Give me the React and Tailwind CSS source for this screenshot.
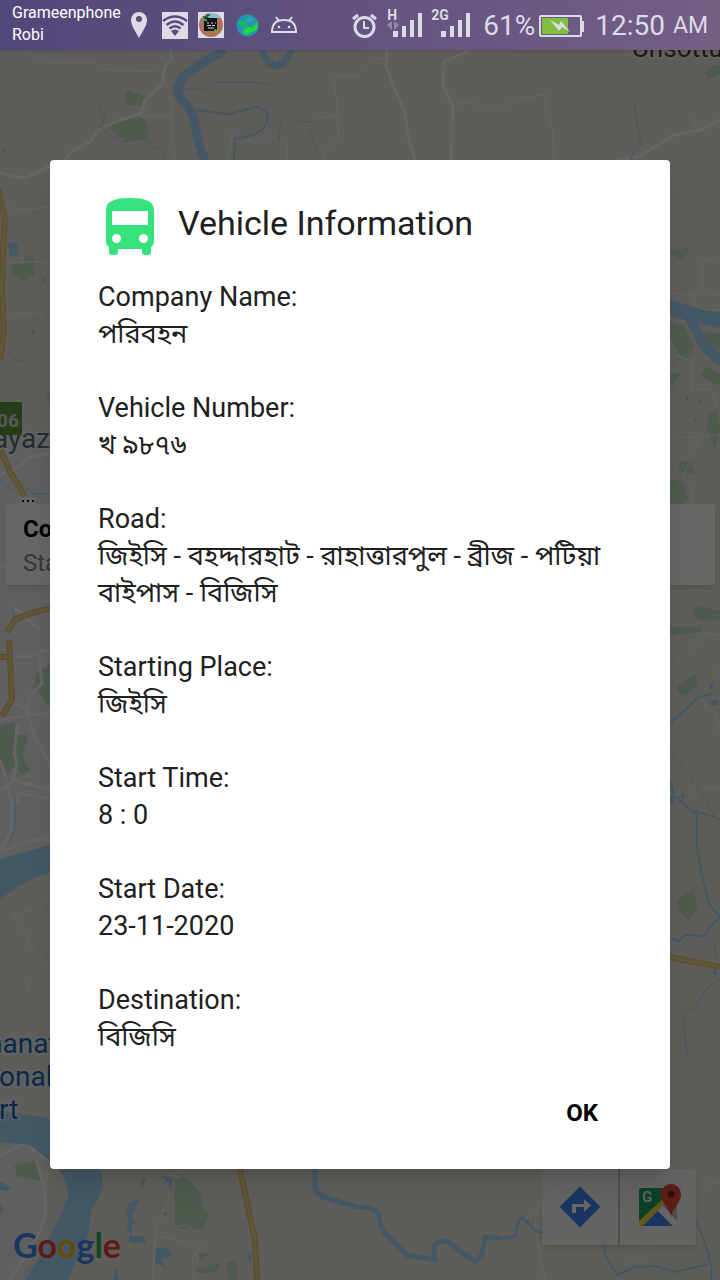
import React from "react";

const fields = [
  { label: "Company Name:", value: "পরিবহন" },
  { label: "Vehicle Number:", value: "খ ৯৮৭৬" },
  { label: "Road:", value: "জিইসি - বহদ্দারহাট - রাহাত্তারপুল - ব্রীজ - পটিয়া বাইপাস - বিজিসি" },
  { label: "Starting Place:", value: "জিইসি" },
  { label: "Start Time:", value: "8 : 0" },
  { label: "Start Date:", value: "23-11-2020" },
  { label: "Destination:", value: "বিজিসি" },
];

function CityMap() {
  return (
    <svg
      className="absolute inset-0 h-full w-full"
      viewBox="0 0 720 1280"
      preserveAspectRatio="xMidYMin slice"
      fontFamily="Roboto, sans-serif"
      aria-label="Map"
    >
      <rect width="720" height="1280" fill="#ebe8df" />
      {/* built-up area */}
      <path d="M0 440 L50 455 V845 L0 860 Z M0 1150 L34 1140 L48 1175 L46 1220 L20 1280 H0 Z" fill="#eeeeee" />
      {/* parks */}
      <g fill="#c3e0c0">
        <path d="M126 90 L144 96 L141 106 L124 105 Z M108 124 L125 117 L142 117 L148 125 L147 139 L131 142 L118 137 Z" />
        <path d="M24 254 L36 260 L34 266 L22 263 Z M12 264 L30 263 L35 274 L24 281 L11 275 Z" />
        <path d="M705 72 L712 66 L720 65 V74 L708 79 Z" />
        <path d="M670 251 L690 247 L684 260 L670 254 Z M670 322 L684 325 L693 345 L687 358 L676 353 L670 336 Z M701 332 L720 334 V351 L708 348 Z" />
        <path d="M700 374 L706 367 L720 373 V385 L708 381 Z M670 373 L681 373 L671 388 Z M708 413 L717 412 L720 431 L715 450 L707 428 Z M679 462 L690 460 L695 475 L680 471 Z M670 480 L683 481 L688 499 L681 506 L670 506 Z" />
        <path d="M695 605 L720 611 V619 L703 621 L693 614 Z M670 627 L701 627 V632 L670 635 Z M677 687 L686 681 L696 674 L697 685 L687 696 L678 693 Z M677 899 L694 888 L697 910 L689 921 L677 909 Z" />
        <path d="M0 727 L15 722 L15 765 L5 777 L0 769 Z M17 735 H28 L23 757 L30 770 L23 775 L16 768 Z M36 672 L50 665 V707 L34 687 Z" />
        <path d="M175 1180 L184 1176 L200 1192 L204 1208 L209 1214 L203 1230 L175 1228 Z M199 1252 L210 1255 L199 1261 Z M196 1270 L221 1262 L216 1272 L199 1274 Z M226 1263 L236 1261 L238 1280 H229 Z M14 1166 L38 1160 L40 1181 L17 1176 Z" />
      </g>
      {/* white streets */}
      <g fill="none" stroke="#fcfcfc" strokeLinejoin="round">
        <path strokeWidth="3" d="M171 50 V60 L165 66 L162 84 L145 101 L141 114 L120 120 L98 130 L90 142 L73 150 L65 160" />
        <path strokeWidth="1" d="M20 50 L50 62 L96 63 L97 69 L155 72 M165 84 L171 94 V115 L174 160 M141 117 L171 116" />
        <path strokeWidth="3" d="M387 50 L386 66 L395 90 L405 112 L408 136 L415 160 M470 50 L444 62 L443 86 L453 106 L451 160" />
        <path strokeWidth="1" d="M386 58 L373 59 L360 73 M453 105 L467 102 L497 110 L525 97 L545 95 L546 116 L552 128 L554 160 M334 77 L360 75 M334 77 L338 116 L316 118 M338 116 L339 140 L325 150 L323 160 M228 160 L232 132 L253 143 L263 135 L287 140 V160 M694 128 L695 118 L689 116" />
        <path strokeWidth="3" d="M720 120 L700 130 L674 135 L640 156 L615 161 M0 173 L25 178 L50 166" />
        <path strokeWidth="1" d="M0 205 L20 210 L50 207 M10 262 H50 M5 320 L18 313 L35 314 L50 311 M22 248 L24 266" />
        <path strokeWidth="3" d="M0 475 L20 467 L27 458 L50 453 M0 566 H14 M0 600 L20 612 L40 630 M10 656 L29 657 L39 651 L50 651 M39 650 L40 668 L42 683 L29 698 L27 712 L35 737 L50 764 M0 720 L30 715 L50 713 M18 723 L14 752 L17 765 L12 782 L0 790 M12 780 L50 790 M0 760 L5 775 L10 800 L18 802 V793 L50 799 M12 802 L11 831 L0 852 M0 852 L20 843 L50 837 M12 700 L32 714 M0 1156 L25 1143 L50 1162 M36 1160 L44 1185 L46 1212 L40 1232 L10 1280" />
        <path strokeWidth="1" d="M50 901 L14 916 L34 951 L50 966 M23 981 H29 V992 M720 258 L702 262 V288 L694 291 V304 L704 310 H720 M670 293 L694 295 M704 288 L714 294 L720 295 M670 342 L682 360 H691 V389 L713 390 L716 405 M670 438 L700 437 L720 434 M700 437 L684 474 L693 494 L691 502" />
        <path strokeWidth="1" d="M670 668 L686 652 L698 640 M720 668 L702 695 L706 709 L715 712 L720 732 M670 795 L690 793 L695 788 L720 787 M700 1185 L720 1182 M720 635 L699 633 L694 640" />
        <path strokeWidth="1" d="M185 1169 L177 1172 L168 1200 L156 1230 L152 1280 M156 1237 L172 1238 L179 1242 L201 1245 L192 1260 L194 1280 M171 1228 L185 1225 L199 1232 M540 1169 L541 1199 L535 1215 L538 1245 L545 1280 M548 1192 L575 1185 L590 1172 M622 1266 L640 1258 L648 1247 L655 1210" />
      </g>
      <path d="M670 750 L690 775 L720 826" fill="none" stroke="#cfcfcb" />
      {/* rivers */}
      <g fill="none" stroke="#a8dafc" strokeLinejoin="round">
        <path strokeWidth="9" d="M225 50 Q195 66 184 76 Q172 92 184 102 Q192 108 195 125 Q198 145 206 163" />
        <path strokeWidth="7" d="M262 50 Q275 82 292 50" />
        <path strokeWidth="2" d="M195 110 L230 114 L256 107 Q274 112 265 126 Q258 137 235 138 L234 160" />
        <path strokeWidth="1" d="M182 89 L203 89 L213 82 L255 82 L276 86 M99 105 L105 116 L101 128 L120 142 L143 139 L152 147 L163 150 L164 160 M279 140 Q278 115 292 115 M297 121 L313 122 M310 132 L316 151 M625 93 L634 104 L641 145 L633 152 L631 160" />
        <path strokeWidth="15" d="M666 305 Q690 316 724 321" />
        <path strokeWidth="10" d="M690 317 Q705 355 724 362" />
        <path strokeWidth="1" d="M0 351 L10 352 L16 361 L26 359 M0 599 L12 608 L16 619 M0 480 L12 490 L20 482 L33 494 H50 M15 795 V828 L9 843 M670 361 L691 357 L694 342" />
        <path strokeWidth="2" d="M670 723 L681 713 L691 705 L698 697 L712 694 M670 780 L674 796 L697 815 V848 L702 875 L709 904 L720 917 L710 927 L705 936 L685 935 L679 941 L670 938 M695 811 L720 819" />
        <path strokeWidth="1" d="M720 979 L705 990 L697 1006 L683 1013 L687 1055 M720 941 Q708 946 720 962" />
        <path strokeWidth="5" d="M315 1165 V1190 L323 1197 L358 1207 Q378 1207 379 1216 Q380 1228 386 1234 L408 1256 L435 1260 L434 1246 Q436 1240 448 1242 L475 1262 L482 1255 L485 1237 L500 1238" />
        <path strokeWidth="3" d="M500 1238 L515 1237 L518 1222 Q521 1214 527 1222 L536 1231 L548 1234 L585 1225" />
        <path strokeWidth="2" d="M585 1225 H603 L605 1255 L617 1275 L635 1267 L655 1266 L675 1272 L709 1264 M680 1208 L693 1215 L704 1240 L711 1264 V1280" />
      </g>
      <g fill="#a8dafc">
        <path d="M0 859 L50 845 V873 Q25 880 0 899 Z" />
        <path d="M0 1111 L45 1117 L90 1150 L102 1175 Q104 1195 92 1208 L88 1235 L68 1280 H25 L35 1264 Q60 1220 68 1196 Q69 1178 53 1164 L30 1145 L0 1142 Z" />
        <path d="M7 242 L17 243 L18 257 L10 256 Z M46 394 L50 393 V407 Z M32 330 H35 V335 H32 Z M42 278 H45 V282 H42 Z M15 86 L18 87 L17 90 L15 89 Z M3 150 H6 V153 H3 Z M0 1181 L10 1187 L10 1191 L0 1190 Z M0 1205 L4 1209 L0 1213 Z" />
        <path d="M141 1180 L147 1177 L144 1187 L140 1184 Z M162 1176 L173 1178 L172 1193 L168 1183 Z M130 1202 L139 1200 L134 1212 L132 1220 L139 1221 L132 1225 V1235 L127 1230 L128 1218 L125 1210 Z M129 1235 L144 1237 L146 1244 L129 1242 Z M156 1247 L168 1248 L172 1256 L161 1260 L167 1268 L155 1263 Z M115 1265 L120 1280 H113 Z M249 1253 L252 1254 L251 1264 L247 1260 Z" />
        <path d="M186 1187 L192 1190 L190 1192 L187 1190 Z M192 1214 L194 1218 L190 1219 Z M199 1199 L202 1202 L199 1203 Z M163 1212 H167 V1215 H163 Z" />
        <path d="M686 396 H688 V400 H686 Z M699 400 H701 V404 H699 Z M694 419 H696 V423 H694 Z M709 683 H713 V689 H709 Z M711 700 H717 V706 H711 Z M681 793 H684 V798 H681 Z M670 796 H674 V804 H670 Z M713 970 H717 V975 H713 Z" />
      </g>
      {/* highways */}
      <g fill="none" strokeLinejoin="round">
        <path stroke="#dcc06a" strokeWidth="6" d="M-2 190 L5 220 L3 250 L2 290 L4 330 L0 360 M0 449 L10 472 L20 487 L27 505 M50 609 Q30 612 15 620 L7 632 M9 640 L12 700 L2 716 M0 657 H9 M239 1165 L255 1240 L257 1280 M670 957 L720 967" />
        <path stroke="#f0d588" strokeWidth="4" d="M-2 190 L5 220 L3 250 L2 290 L4 330 L0 360 M0 449 L10 472 L20 487 L27 505 M50 609 Q30 612 15 620 L7 632 M9 640 L12 700 L2 716 M0 657 H9 M239 1165 L255 1240 L257 1280 M670 957 L720 967" />
      </g>
      {/* labels */}
      <g stroke="#ffffff" strokeOpacity="0.500" strokeWidth="4" paintOrder="stroke" strokeLinejoin="round">
        <text x="632" y="57" fontSize="26" fill="#444444">Unsottu</text>
        <text x="-7" y="448" fontSize="28" fill="#56717e">ayaz</text>
        <g fontSize="28" fill="#1a66c2">
          <text x="-13" y="1053">nanat</text>
          <text x="-1" y="1086">onal</text>
          <text x="-1" y="1119">rt</text>
        </g>
      </g>
      <rect x="-5" y="402" width="27" height="33" fill="#5c9c3a" />
      <text x="-3" y="427" fontSize="19" fontWeight="700" fill="#dddddd">06</text>
      <rect x="20" y="497" width="16" height="7" fill="#ffffff" />
      <path d="M22 501 h2 m3 0 h2 m3 0 h2" stroke="#111111" strokeWidth="2" />
    </svg>
  );
}

function SignalBars() {
  return (
    <svg width="30" height="27" viewBox="0 0 30 27" fill="currentColor" aria-hidden="true">
      <rect x="0" y="18" width="5" height="6" />
      <rect x="9" y="13" width="4" height="11" />
      <rect x="17" y="7" width="4" height="17" />
      <rect x="25" y="0" width="4" height="24" />
    </svg>
  );
}

function StatusBar() {
  return (
    <header className="relative z-20 flex h-[50px] items-center bg-linear-to-r from-[#52477a] to-[#745f85] pr-3 pl-3 text-[#dedae6] shadow-sm">
      <div className="mb-0.5 w-[110px] text-base leading-[22px] text-white">
        <p>Grameenphone</p>
        <p>Robi</p>
      </div>
      <div className="ml-2 flex items-center">
        <svg width="18" height="26" viewBox="0 0 18 26" aria-hidden="true">
          <path fillRule="evenodd" fill="currentColor" d="M9 0 A8 8 0 0 1 17 8 C17 14 12 20 9 26 C6 20 1 14 1 8 A8 8 0 0 1 9 0 Z M9 4 a3 3 0 1 0 0 6 a3 3 0 1 0 0 -6 Z" />
        </svg>
        <svg className="ml-3.5" width="26" height="27" viewBox="0 0 26 27" aria-hidden="true">
          <rect width="26" height="27" fill="currentColor" />
          <g fill="none" stroke="#574c7b" strokeWidth="2.6">
            <path d="M1 9 Q13 0 25 9" />
            <path d="M4.500 13 Q13 6 21.500 13" />
            <path d="M7.500 16.500 Q13 12 18.500 16.500" />
          </g>
          <path d="M9 19 Q13 16 17 19 L13 24 Z" fill="#574c7b" />
        </svg>
        <svg className="ml-2.5" width="26" height="26" viewBox="0 0 26 26" aria-hidden="true">
          <rect width="26" height="26" fill="currentColor" />
          <circle cx="13" cy="13" r="12" fill="#ad715c" />
          <path d="M3 6 Q13 -4 23 6 Z" fill="#82bfd1" />
          <path d="M5 5 h4 v-2 h3 M6 6 h5" stroke="#244b35" strokeWidth="1.500" fill="none" />
          <rect x="6" y="6" width="13" height="13" fill="#101416" />
          <path d="M9 11 h2 m2 0 h2 m2 0 h1 M9 13.500 h4 m1 0 h3 M10 16 h6" stroke="#d4dadb" strokeWidth="1" />
          <path d="M6 7 l3 2 M16 18.500 h3" stroke="#29c746" strokeWidth="2" />
        </svg>
        <svg className="ml-3" width="23" height="23" viewBox="0 0 23 23" aria-hidden="true">
          <circle cx="11.500" cy="11.500" r="11" fill="#2894b0" />
          <path d="M1 7 L9 10 L13 14 L22 8 L21 16 L13 19 L11 21 L7 19 L9 15 Z" fill="#1cdc40" />
          <path d="M2 7 L10 8 L12 14 L9 15 Z M13 14 L22 8 L17 14 Z" fill="#16b95b" />
          <path d="M13 2 L18 6 L13 9 L9 7 Z" fill="#24aaae" />
        </svg>
        <svg className="ml-3" width="26" height="18" viewBox="0 0 26 18" fill="none" stroke="currentColor" strokeWidth="2" aria-hidden="true">
          <path d="M1 16 Q1 4 13 4 Q25 4 25 16 Z M8 5 L5 1 M18 5 L21 1" />
          <circle cx="8" cy="11" r="1.300" fill="currentColor" stroke="none" />
          <circle cx="18" cy="11" r="1.300" fill="currentColor" stroke="none" />
        </svg>
      </div>
      <div className="mt-0.5 ml-auto flex items-center">
        <svg width="25" height="26" viewBox="0 0 25 26" fill="none" stroke="currentColor" aria-hidden="true">
          <circle cx="12.500" cy="14" r="9.500" strokeWidth="3" />
          <path d="M12 8 V15 H17" strokeWidth="2" />
          <path d="M1 6 L6 2 M19 2 L24 6" strokeWidth="3" />
        </svg>
        <div className="relative ml-4">
          <SignalBars />
          <span className="absolute -top-1.5 -left-1.5 text-sm leading-4 font-bold">H</span>
          <svg className="absolute top-2 -left-1.5" width="12" height="9" viewBox="0 0 12 9" fill="#9288ac" aria-hidden="true">
            <path d="M0 4 L5 0 V9 Z M12 4 L7 0 V9 Z" />
          </svg>
        </div>
        <div className="relative ml-[18px]">
          <SignalBars />
          <span className="absolute -top-1.5 -left-2.5 text-sm leading-4 font-bold">2G</span>
        </div>
        <span className="ml-3 text-[28px] leading-8">61%</span>
        <svg className="ml-1" width="46" height="23" viewBox="0 0 46 23" aria-hidden="true">
          <rect x="1" y="1" width="41" height="20" rx="1" fill="none" stroke="currentColor" strokeWidth="2" />
          <path d="M43 6 h2 v11 h-2 Z" fill="currentColor" />
          <rect x="3" y="3" width="26" height="16" fill="#82be3d" />
          <path d="M11 5 L20 10 L22 6 L31 17 L23 12 L20 16 Z" fill="currentColor" />
        </svg>
        <span className="ml-2.5 text-[28px] leading-8">12:50</span>
        <span className="ml-2 text-[23px] leading-8">AM</span>
      </div>
    </header>
  );
}

function GoogleMark() {
  return (
    <p className="font-[Lato,sans-serif] text-[34px] leading-10 font-bold" aria-label="Google">
      <span className="text-[#4285f4]">G</span>
      <span className="text-[#ea4335]">o</span>
      <span className="text-[#fbbc05]">o</span>
      <span className="text-[#4285f4]">g</span>
      <span className="text-[#34a853]">l</span>
      <span className="text-[#ea4335]">e</span>
    </p>
  );
}

function MapToolbar() {
  return (
    <div className="flex h-[76px] divide-x-2 divide-[#c4c4c4] rounded-xs bg-white/70 shadow-md">
      <button type="button" aria-label="Directions" className="flex w-[78px] items-center justify-center">
        <svg width="40" height="40" viewBox="0 0 40 40" aria-hidden="true">
          <path d="M20 1 L39 20 L20 39 L1 20 Z" fill="#4285f4" stroke="#4285f4" strokeWidth="2" strokeLinejoin="round" />
          <path d="M12 26 V17 H24 V12 L31 18.500 L24 25 V20 H16 V26 Z" fill="#ffffff" />
        </svg>
      </button>
      <button type="button" aria-label="Open in Google Maps" className="flex w-[76px] items-center justify-center">
        <svg className="mb-1 ml-1" width="42" height="42" viewBox="0 0 42 42" aria-hidden="true">
          <path d="M0 38 L28 10 L38 20 V42 H4 Z" fill="#c4c4c4" />
          <path d="M0 42 V36 L26 12 L30 15 L3 42 Z" fill="#ffd83b" />
          <path d="M4 42 L19 27 L34 42 Z" fill="#4285f4" />
          <path d="M19 27 L24 22 L38 37 V42 H34 Z" fill="#ffffff" />
          <path d="M0 6 Q0 4 2 4 H26 V13 L0 37 Z" fill="#1ea362" />
          <path d="M32 33 C31 24 22 20 22 10 A10 10 0 0 1 42 10 C42 20 33 24 32 33 Z" fill="#e64a3d" />
          <circle cx="32" cy="10" r="3.500" fill="#7b231e" />
          <text x="3" y="18" fontFamily="Roboto, sans-serif" fontSize="15" fontWeight="500" fill="#ffffff">G</text>
        </svg>
      </button>
    </div>
  );
}

export default function App() {
  return (
    <div className="relative flex min-h-screen flex-col overflow-hidden font-[Roboto,'Noto_Sans_Bengali',sans-serif]">
      <CityMap />
      <StatusBar />
      <main className="relative flex flex-1 flex-col">
        <section className="mx-[5px] mt-[454px] h-[81px] rounded-xs bg-white px-[18px] pt-2 text-2xl leading-[34px] shadow-md">
          <p className="font-bold text-black">Co</p>
          <p className="text-[#888888]">Sta</p>
        </section>
        <div className="mt-auto flex items-end justify-between pr-6 pb-[35px] pl-[13px]">
          <div className="-mb-5">
            <GoogleMark />
          </div>
          <MapToolbar />
        </div>
      </main>

      <div className="absolute inset-0 z-10 flex items-center bg-black/60 px-[50px] pt-[49px]">
        <div
          role="dialog"
          aria-modal="true"
          aria-labelledby="dialog-title"
          className="w-full rounded-sm bg-white px-12 pt-[37px] pb-[26px] text-[#202020] shadow-xl"
        >
          <div className="flex h-[60px] items-center">
            <svg className="ml-2" width="48" height="58" viewBox="0 0 48 58" aria-hidden="true">
              <path
                fillRule="evenodd"
                fill="#36e27b"
                d="M0 12 C0 3 9 0 24 0 C39 0 48 3 48 12 V44 Q48 47 45 49 V54 Q45 57 42 57 H39 Q36 57 36 54 V51 H12 V54 Q12 57 9 57 H6 Q3 57 3 54 V49 Q0 47 0 44 Z M6 13 V27 H42 V13 Z M10.500 36 a4.500 4.500 0 1 0 0 9 a4.500 4.500 0 1 0 0 -9 Z M37.500 36 a4.500 4.500 0 1 0 0 9 a4.500 4.500 0 1 0 0 -9 Z"
              />
            </svg>
            <h1 id="dialog-title" className="mb-2 ml-6 text-[34px] leading-[46px]">
              Vehicle Information
            </h1>
          </div>
          <dl className="mt-[22px] flex flex-col gap-[37px] text-[27px] leading-[37px]">
            {fields.map((field) => (
              <div key={field.label}>
                <dt>{field.label}</dt>
                <dd>{field.value}</dd>
              </div>
            ))}
          </dl>
          <div className="mt-[27px] flex justify-end">
            <button type="button" className="h-[60px] px-6 text-2xl font-bold text-black">
              OK
            </button>
          </div>
        </div>
      </div>
    </div>
  );
}
